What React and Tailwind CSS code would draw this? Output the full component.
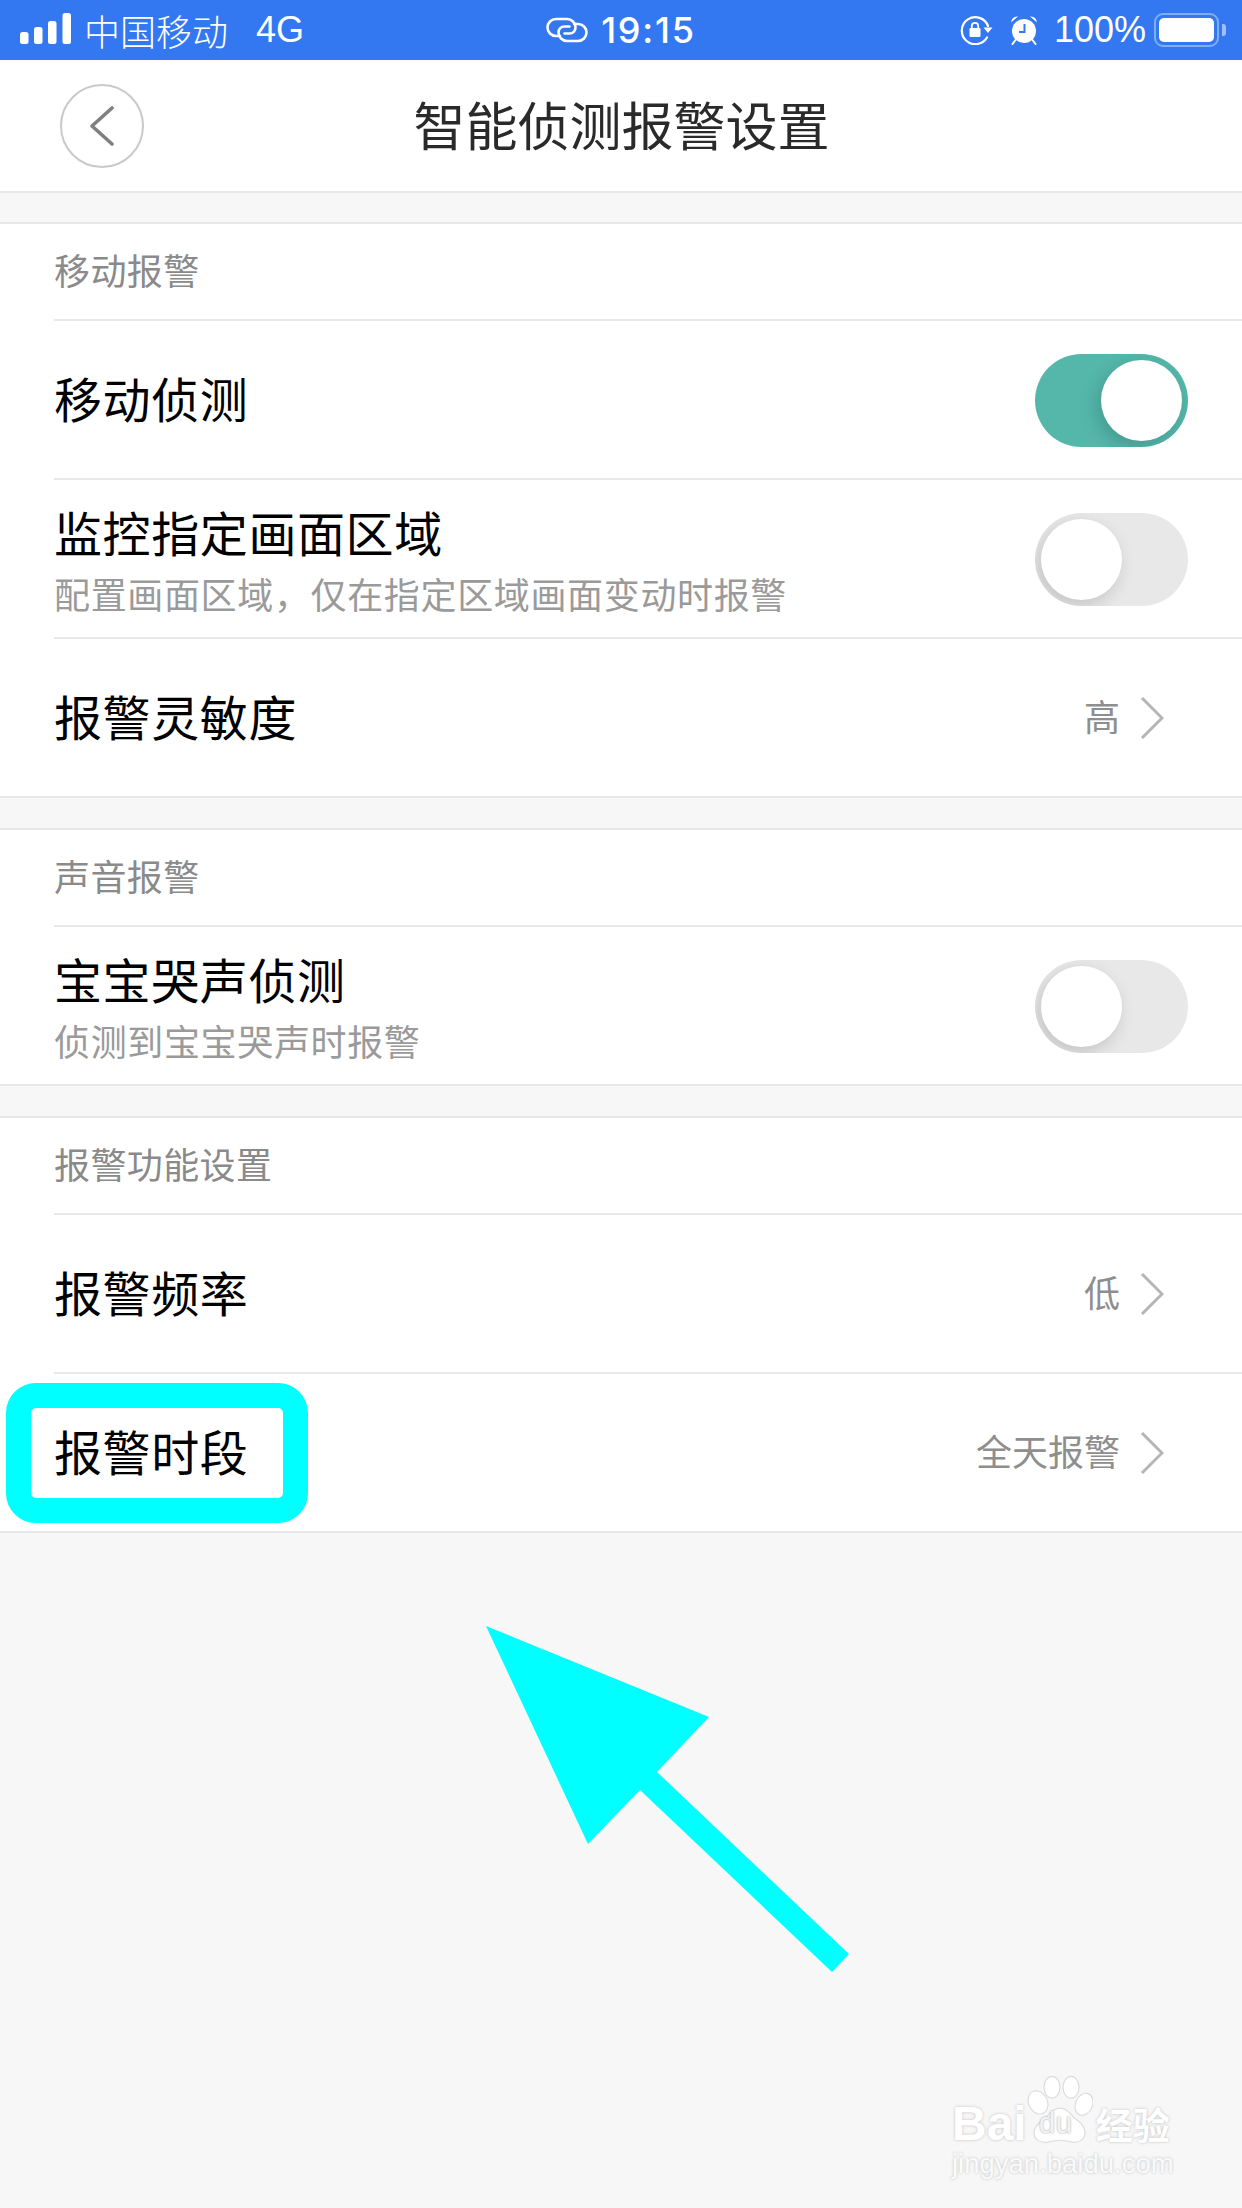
import React from "react";

const CJK = "font-['Noto_Sans_CJK_SC','Liberation_Sans',sans-serif]";

function Signal() {
  return (
    <svg width="52" height="34" viewBox="0 0 52 34" className="block">
      <rect x="0" y="19" width="8.5" height="12" rx="2.5" fill="#fff" />
      <rect x="14" y="14" width="8.5" height="17" rx="2.5" fill="#fff" />
      <rect x="28" y="8" width="8.5" height="23" rx="2.5" fill="#fff" />
      <rect x="42.5" y="0" width="8.5" height="31" rx="2.5" fill="#fff" />
    </svg>
  );
}

function LinkIcon() {
  return (
    <svg width="42" height="26" viewBox="0 0 42 26" fill="none" stroke="#fff" strokeWidth="2.6" className="block">
      <path d="M14 19H10a8.5 8.5 0 0 1 0-17h11a8.5 8.5 0 0 1 8.5 8.5c0 3.5-2.5 6-6 6h-5" strokeLinecap="round" />
      <path d="M28 7h4a8.5 8.5 0 0 1 0 17H21a8.5 8.5 0 0 1-8.5-8.5c0-3.5 2.5-6 6-6h5" strokeLinecap="round" />
    </svg>
  );
}

function RotationLock() {
  return (
    <svg width="34" height="30" viewBox="0 0 34 30" fill="none" className="block">
      <path d="M27 22.5A13.5 13.5 0 1 1 28 11" stroke="#fff" strokeWidth="2.2" strokeLinecap="round" />
      <path d="M23.5 12.5h9L28 18z" fill="#fff" />
      <rect x="9.5" y="13" width="11" height="9" rx="1.2" fill="#fff" />
      <path d="M11.8 13.5v-2.5a3.2 3.2 0 0 1 6.4 0v2.5" stroke="#fff" strokeWidth="1.8" />
    </svg>
  );
}

function Alarm() {
  return (
    <svg width="30" height="30" viewBox="0 0 30 30" className="block">
      <circle cx="15" cy="16" r="12" fill="#fff" />
      <path d="M15.5 9v8H10" stroke="#3478f1" strokeWidth="2" fill="none" />
      <path d="M2 7.5 Q3 1 9 1.5 Z M28 7.5 Q27 1 21 1.5 Z" fill="#fff" />
      <path d="M6.5 25 3.5 29 M23.5 25 26.5 29" stroke="#fff" strokeWidth="2" strokeLinecap="round" />
    </svg>
  );
}

function Battery() {
  return (
    <div className="flex items-center gap-[3px]">
      <div className="w-[65px] h-[34px] rounded-[9px] border-2 border-[#7fadf6] p-[3px] flex">
        <div className="flex-1 bg-white rounded-[5px]" />
      </div>
      <div className="w-[4px] h-[12px] bg-[#9cc0f8] rounded-r-[3px]" />
    </div>
  );
}

function StatusBar() {
  return (
    <div className="h-[60px] bg-[#3478f1] text-white grid grid-cols-3 items-center font-['Liberation_Sans','Noto_Sans_CJK_SC',sans-serif] shrink-0">
      <div className="flex items-center pl-[20px]">
        <Signal />
        <span className={`ml-[12px] text-[36px] leading-none ${CJK} font-light`}>中国移动</span>
        <span className="ml-[28px] text-[36px] leading-none">4G</span>
      </div>
      <div className="flex items-center justify-center gap-[13px]">
        <LinkIcon />
        <span className="text-[36px] leading-none font-medium tracking-[1.8px] font-['Inter',sans-serif]">19:15</span>
      </div>
      <div className="flex items-center justify-end pr-[16px]">
        <RotationLock />
        <span className="w-[15px]" />
        <Alarm />
        <span className="ml-[15px] mr-[8px] text-[36px] leading-none">100%</span>
        <Battery />
      </div>
    </div>
  );
}

function Header() {
  return (
    <div className="h-[133px] bg-white border-b-2 border-[#e8e8e8] flex items-center shrink-0 pl-[60px] pr-[143px]">
      <div className="w-[84px] h-[84px] rounded-full border-2 border-[#c9c9c9] flex items-center justify-center">
        <svg width="26" height="40" viewBox="0 0 26 40" fill="none" stroke="#808080" strokeWidth="3.6" strokeLinecap="round" strokeLinejoin="round">
          <path d="M23 2 3 20l20 18" />
        </svg>
      </div>
      <div className={`flex-1 text-center text-[52px] leading-none pb-[4px] text-[#2a2a2a] ${CJK}`}>智能侦测报警设置</div>
    </div>
  );
}

function Toggle({ on }) {
  return (
    <div className={`w-[153px] h-[93px] mt-[1px] rounded-full p-[6px] flex overflow-hidden ${on ? "bg-[#54b7aa] justify-end" : "bg-[#e8e8e8] justify-start"}`}>
      <div className="w-[81px] h-[81px] rounded-full bg-white shadow-[-4px_6px_18px_rgba(0,0,0,0.16)]" />
    </div>
  );
}

function Chevron() {
  return (
    <svg width="24" height="44" viewBox="0 0 24 44" fill="none" stroke="#b5b5b5" strokeWidth="3" className="block ml-[20px]">
      <path d="M2 2l20 20L2 42" />
    </svg>
  );
}

function Value({ children }) {
  return (
    <div className="flex items-center pr-[78px]">
      <span className="text-[36px] leading-none pb-[5px] text-[#8e8e8e]">{children}</span>
      <Chevron />
    </div>
  );
}

function Row({ title, sub, right, last, overlay }) {
  return (
    <div className="relative pl-[54px]">
      <div className={`flex items-center justify-between ${last ? "h-[157px]" : "h-[159px] border-b-2 border-[#e8e8e8]"}`}>
        <div className={`flex flex-col ${sub ? "" : "pb-[5px]"}`}>
          <span className="text-[48px] leading-[58px] tracking-[0.6px] text-black">{title}</span>
          {sub && <span className="text-[36px] leading-[44px] tracking-[0.65px] text-[#9a9a9a] mt-[11px]">{sub}</span>}
        </div>
        {right}
      </div>
      {overlay}
    </div>
  );
}

function Section({ title, children, className }) {
  return (
    <section className={`bg-white border-y-2 border-[#e8e8e8] ${className}`}>
      <div className="pl-[54px]">
        <div className="h-[97px] pb-[6px] flex items-center border-b-2 border-[#e8e8e8] text-[36px] leading-none tracking-[0.4px] text-[#8a8a8a]">{title}</div>
      </div>
      {children}
    </section>
  );
}

function Watermark() {
  const glow = "[text-shadow:0_0_3px_#bdbdbd]";
  return (
    <div className="absolute left-[952px] top-[2075px] w-[230px] flex flex-col text-white font-['Liberation_Sans',sans-serif]">
      <div className="flex items-end h-[70px]">
        <span className={`text-[48px] leading-[42px] font-bold ${glow}`}>Bai</span>
        <div className="relative w-[66px] h-[70px] shrink-0">
          <svg width="66" height="70" viewBox="0 0 66 74" preserveAspectRatio="none" fill="#fff" stroke="#dcdcdc" strokeWidth="1.2">
            <ellipse cx="11" cy="29" rx="9.5" ry="12.5" transform="rotate(-20 11 29)" />
            <ellipse cx="25" cy="13" rx="8" ry="11.5" />
            <ellipse cx="44" cy="13" rx="8" ry="11.5" />
            <ellipse cx="57" cy="31" rx="8.5" ry="12" transform="rotate(20 57 31)" />
            <path d="M33 35c7 0 10 6 15 11 5 4 10 8 10 15 0 8-7 11-13 10-4-1-8-2-12-2s-8 1-12 2c-7 1-14-2-14-10 0-7 6-11 11-15 5-5 8-11 15-11z" />
          </svg>
          <span className="absolute left-[12px] bottom-[7px] text-[30px] leading-[30px] text-[#f3f3f3] [text-shadow:0_0_2px_#999]">du</span>
        </div>
        <span className={`ml-[3px] text-[37px] leading-[42px] font-bold font-['Noto_Sans_CJK_SC',sans-serif] ${glow}`}>经验</span>
      </div>
      <div className={`mt-[4px] text-[27.5px] leading-[30px] whitespace-nowrap text-[#fafafa] ${glow}`}>jingyan.baidu.com</div>
    </div>
  );
}

function Arrow() {
  return (
    <svg className="absolute left-[470px] top-[1610px]" width="400" height="380" viewBox="470 1610 400 380">
      <polygon points="486,1626 709,1717 657,1772 849,1954 832,1972 640,1790 588,1844" fill="#00ffff" />
    </svg>
  );
}

export default function App() {
  const tog = (on) => (
    <div className="pr-[54px]">
      <Toggle on={on} />
    </div>
  );
  return (
    <div className={`relative w-[1242px] h-[2208px] bg-[#f7f7f7] overflow-hidden flex flex-col ${CJK}`}>
      <StatusBar />
      <Header />
      <Section title="移动报警" className="mt-[29px]">
        <Row title="移动侦测" right={tog(true)} />
        <Row title="监控指定画面区域" sub="配置画面区域，仅在指定区域画面变动时报警" right={tog(false)} />
        <Row title="报警灵敏度" right={<Value>高</Value>} last />
      </Section>
      <Section title="声音报警" className="mt-[30px]">
        <Row title="宝宝哭声侦测" sub="侦测到宝宝哭声时报警" right={tog(false)} last />
      </Section>
      <Section title="报警功能设置" className="mt-[30px]">
        <Row title="报警频率" right={<Value>低</Value>} />
        <Row
          title="报警时段"
          right={<Value>全天报警</Value>}
          last
          overlay={<div className="absolute left-[6px] top-[9px] w-[302px] h-[140px] rounded-[30px] border-[25px] border-[#00ffff]" />}
        />
      </Section>
      <Arrow />
      <Watermark />
    </div>
  );
}
